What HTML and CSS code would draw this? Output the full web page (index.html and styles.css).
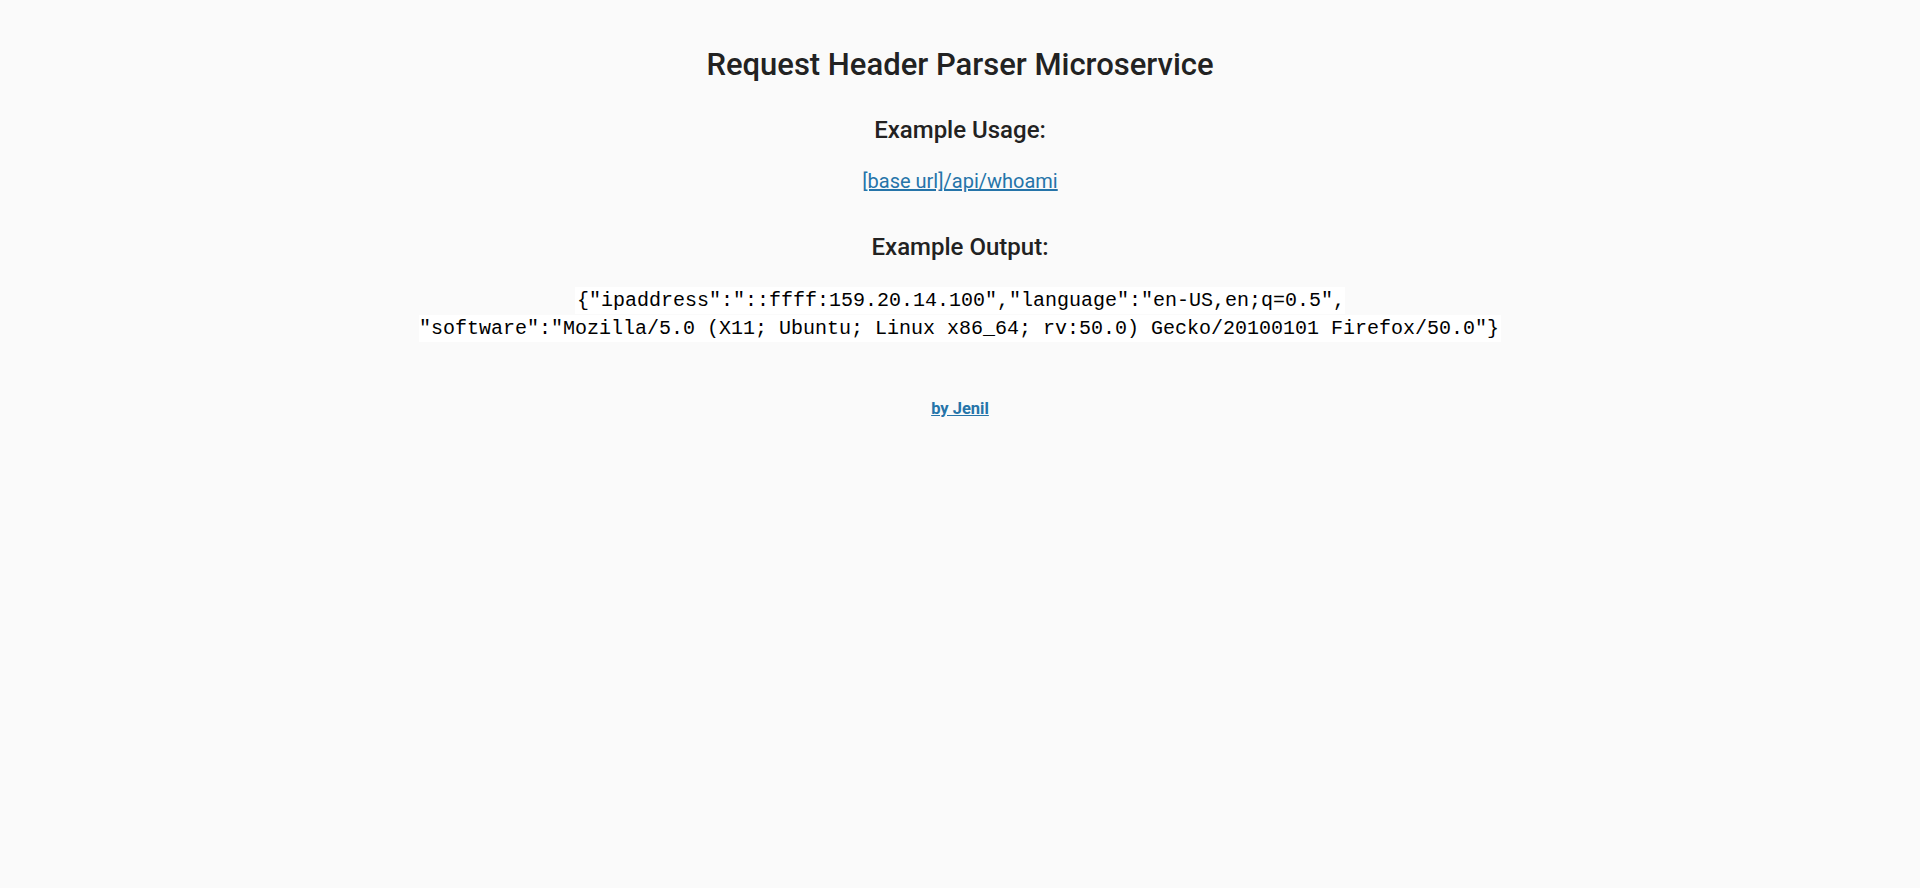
FILE: index.html
```html
<!DOCTYPE html>
<html>
<head>
<meta charset="utf-8">
<title>Request Header Parser</title>
<link rel="stylesheet" href="styles.css">
</head>
<body>
<div class="container">
  <h2 class="title">Request Header Parser Microservice</h2>
  <h3 class="sub sub-usage">Example Usage:</h3>
  <p class="usage"><a href="api/whoami">[base url]/api/whoami</a></p>
  <h3 class="sub sub-output">Example Output:</h3>
  <p class="output"><code>{"ipaddress":"::ffff:159.20.14.100","language":"en-US,en;q=0.5",<br>"software":"Mozilla/5.0 (X11; Ubuntu; Linux x86_64; rv:50.0) Gecko/20100101 Firefox/50.0"}</code></p>
</div>
<div class="footer">
  <p class="credit"><a href="#">by Jenil</a></p>
</div>
</body>
</html>
```

FILE: styles.css
```css
html, body {
  margin: 0;
  padding: 0;
}
body {
  font-family: Roboto, "Liberation Sans", sans-serif;
  font-size: 20px;
  line-height: 28px;
  color: #222;
  background-color: #FAFAFA;
  text-align: center;
}
.container {
  padding-top: 47px;
}
.title {
  margin: 0;
  font-size: 31px;
  line-height: 36px;
  font-weight: 500;
}
.sub {
  margin: 0;
  font-size: 24px;
  line-height: 28px;
  font-weight: 500;
}
.sub-usage {
  margin-top: 33px;
}
.usage {
  margin: 22.5px 0 0;
}
.sub-output {
  margin-top: 38px;
}
.output {
  margin: 24px 0 0;
}
.output code {
  font-family: "Liberation Mono", "Courier New", monospace;
  font-size: 20px;
  line-height: 20px;
  padding: 2px;
  color: #000;
  background-color: #fff;
}
a {
  color: #2574A9;
}
.footer {
  padding-top: 54px;
}
.credit {
  margin: 0;
  font-size: 16.5px;
  font-weight: 700;
}
```
